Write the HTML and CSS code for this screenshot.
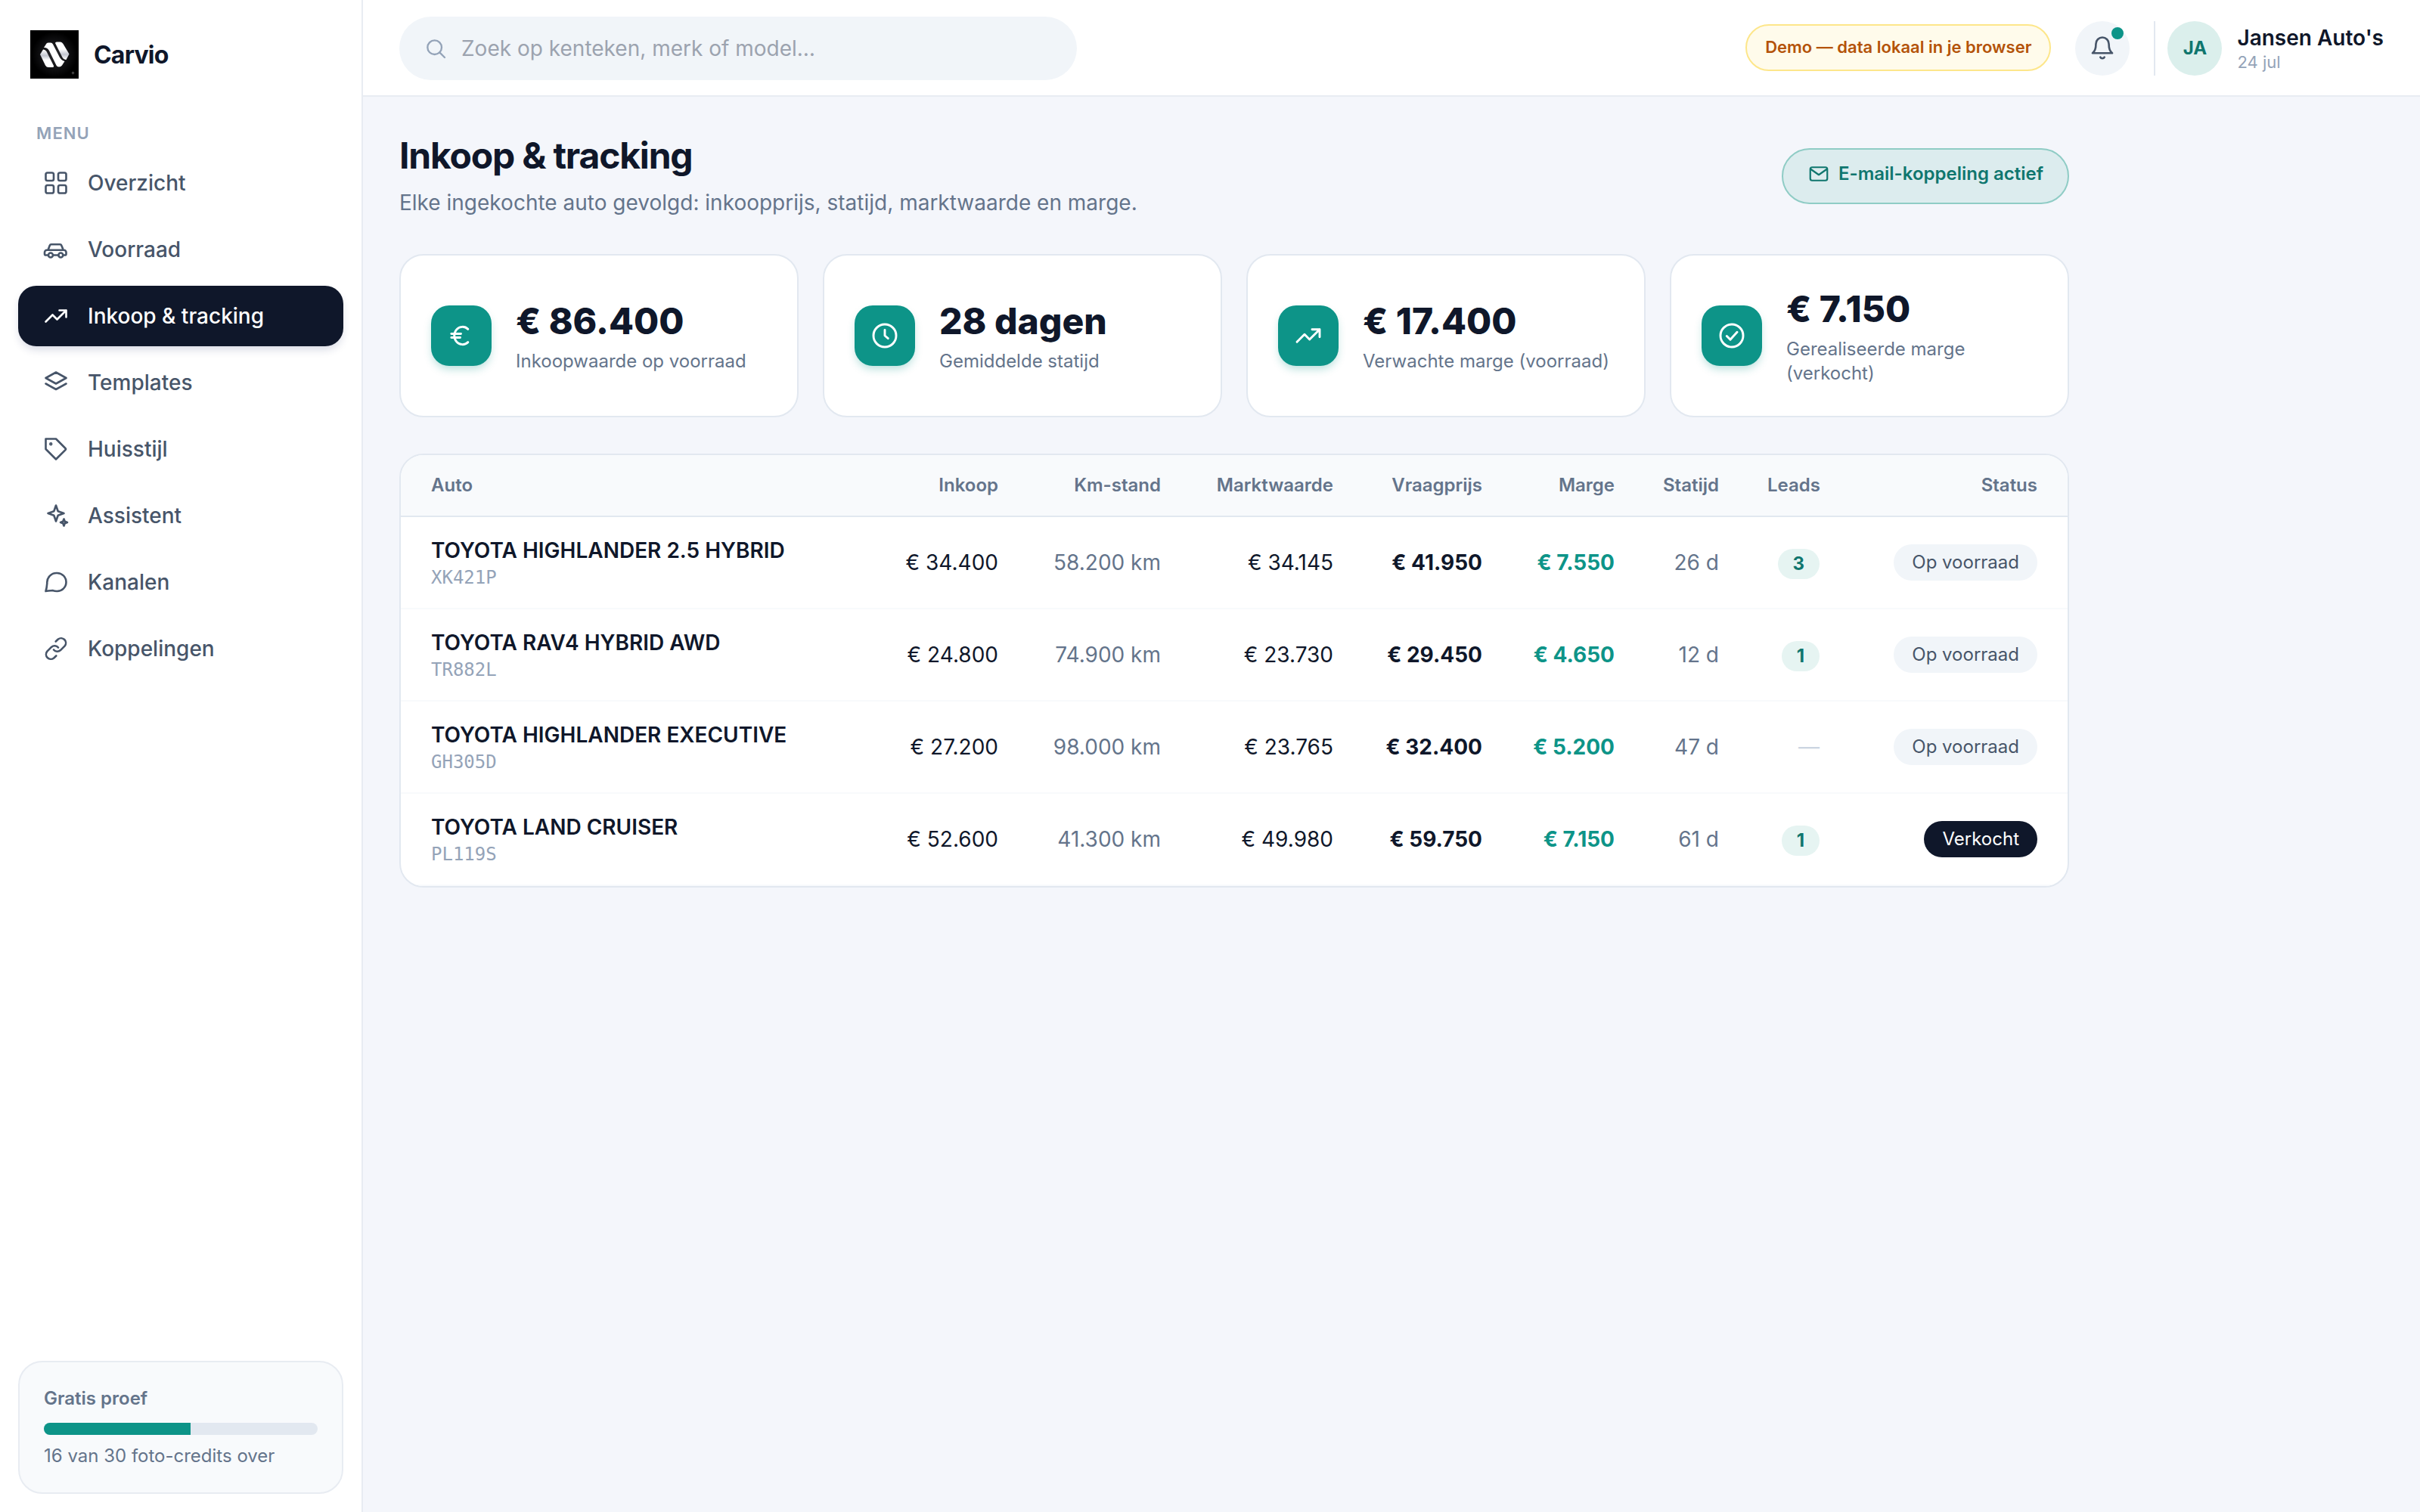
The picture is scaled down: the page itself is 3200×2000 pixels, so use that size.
FILE: index.html
```html
<!DOCTYPE html>
<html lang="nl">
<head>
    <meta charset="UTF-8">
    <meta name="viewport" content="width=device-width, initial-scale=1.0">
    <title>Carvio - Inkoop &amp; tracking</title>
    <link rel="stylesheet" href="styles.css">
</head>
<body>
    <aside class="sidebar">
        <div class="brand">
            <svg class="logo" viewBox="0 0 64 64">
                <defs>
                    <radialGradient id="glow"><stop offset="0" stop-color="#2c2c30"/><stop offset="0.6" stop-color="#111113"/><stop offset="1" stop-color="#000"/></radialGradient>
                    <linearGradient id="left" x1="0" y1="0" x2="0" y2="1"><stop offset="0" stop-color="#fff"/><stop offset="0.35" stop-color="#c3c6d0"/><stop offset="0.6" stop-color="#fff"/></linearGradient>
                    <linearGradient id="right" x1="0" y1="0" x2="0" y2="1"><stop offset="0.4" stop-color="#fff"/><stop offset="0.7" stop-color="#c3c6d0"/><stop offset="1" stop-color="#fff"/></linearGradient>
                </defs>
                <rect width="64" height="64" fill="#000"/>
                <circle cx="32" cy="32" r="30" fill="url(#glow)"/>
                <path d="M13 32L17 25.500Q19.500 25 21.500 28L31 47Q31.500 49 29 49H24Q21.500 49 20 46.500Z" fill="url(#left)"/>
                <path d="M18 23L21.500 17.500Q22.500 16.500 24 16.500H27Q29 16.500 30 18.500L38.500 35Q41 40 45.500 41L42 46.500Q40.500 48.500 38 48.500Q35.500 48.500 34.500 46.500L25 27Q22.500 22.500 18 23Z" fill="#fff"/>
                <path d="M33 17Q33 15.500 35 15.500H40Q42 15.500 43.500 18L51.500 31.500L47.500 39Q44.500 39.500 42.500 36Z" fill="url(#right)"/>
                <path d="M56.500 55v3M55 56.500h3" stroke="#777" stroke-width="0.7"/>
            </svg>
            <span class="brand-name">Carvio</span>
        </div>
        <div class="menu-label">MENU</div>
        <nav class="menu">
            <a class="menu-item">
                <svg class="icon" viewBox="0 0 24 24"><rect x="3" y="3" width="7" height="7" rx="1.500"/><rect x="14" y="3" width="7" height="7" rx="1.500"/><rect x="3" y="14" width="7" height="7" rx="1.500"/><rect x="14" y="14" width="7" height="7" rx="1.500"/></svg>
                Overzicht
            </a>
            <a class="menu-item">
                <svg class="icon" viewBox="0 0 24 24"><path d="M5 17H3a1 1 0 0 1-1-1v-1.500a2 2 0 0 1 2-2h15a2 2 0 0 1 2 2V16a1 1 0 0 1-1 1h-1.500M9.500 17h4.700M5 12.500l1.500-4A1.500 1.500 0 0 1 8 7.500h7.500a1.500 1.500 0 0 1 1.400 1l1.600 4"/><circle cx="7.300" cy="17" r="2"/><circle cx="16.200" cy="17" r="2"/></svg>
                Voorraad
            </a>
            <a class="menu-item active">
                <svg class="icon" viewBox="0 0 24 24"><path d="M3 17l6-6 4 4 8-8M15 7h6v6"/></svg>
                Inkoop &amp; tracking
            </a>
            <a class="menu-item">
                <svg class="icon" viewBox="0 0 24 24"><path d="M12 3l9 5-9 5-9-5 9-5zM3 13l9 5 9-5"/></svg>
                Templates
            </a>
            <a class="menu-item">
                <svg class="icon" viewBox="0 0 24 24"><path d="M3 3h9l8.300 8.300a1 1 0 0 1 0 1.400L12 21l-9-9V3z"/><circle cx="7.500" cy="7.500" r="0.600"/></svg>
                Huisstijl
            </a>
            <a class="menu-item">
                <svg class="icon" viewBox="0 0 24 24"><path d="M12 3l1.800 5.200L19 10l-5.200 1.800L12 17l-1.800-5.200L5 10l5.200-1.800L12 3zM19 15l.8 2.200 2.200.8-2.200.8L19 21l-.8-2.200L16 18l2.200-.8.800-2.200z"/></svg>
                Assistent
            </a>
            <a class="menu-item">
                <svg class="icon" viewBox="0 0 24 24"><path d="M21 12a8 8 0 0 1-8.200 8c-1.300 0-2.500-.2-3.800-.7-2 0-4 .5-6 .7.800-2.500 1-4.500 1.200-7A8.300 8.300 0 0 1 12.800 4 8 8 0 0 1 21 12z"/></svg>
                Kanalen
            </a>
            <a class="menu-item">
                <svg class="icon" viewBox="0 0 24 24"><path d="M10 13a4.200 4.200 0 0 0 6 .4l3.800-3.800a4.200 4.200 0 0 0-5.900-5.900L11.800 5.700M14 11a4.200 4.200 0 0 0-6-.4l-3.800 3.800a4.200 4.200 0 0 0 5.900 5.900l2.100-2"/></svg>
                Koppelingen
            </a>
        </nav>
        <div class="trial">
            <div class="trial-title">Gratis proef</div>
            <div class="progress"><div class="progress-fill" style="width: 53.5%"></div></div>
            <div class="trial-text">16 van 30 foto-credits over</div>
        </div>
    </aside>

    <div class="page">
        <header class="topbar">
            <div class="search">
                <svg class="search-icon" viewBox="0 0 24 24"><circle cx="11" cy="11" r="7"/><path d="M21 21l-5-5"/></svg>
                <span>Zoek op kenteken, merk of model…</span>
            </div>
            <div class="topbar-right">
                <span class="demo-badge">Demo — data lokaal in je browser</span>
                <div class="bell">
                    <svg class="bell-icon" viewBox="0 0 24 24"><path d="M6.300 8a5.700 5.700 0 0 1 11.400 0c0 4.500 1.300 7 3 8.200H3.300c1.700-1.200 3-3.700 3-8.200zM10.200 19.700c.7 1.400 2.900 1.400 3.600 0"/></svg>
                    <span class="bell-dot"></span>
                </div>
                <div class="user">
                    <div class="avatar">JA</div>
                    <div>
                        <div class="user-name">Jansen Auto's</div>
                        <div class="user-date">24 jul</div>
                    </div>
                </div>
            </div>
        </header>

        <main class="content">
            <div class="heading">
                <div>
                    <h1 class="title">Inkoop &amp; tracking</h1>
                    <p class="subtitle">Elke ingekochte auto gevolgd: inkoopprijs, statijd, marktwaarde en marge.</p>
                </div>
                <div class="mail-button">
                    <svg class="mail-icon" viewBox="0 0 24 24"><rect x="3" y="5" width="18" height="14" rx="2"/><path d="M3.500 7l8.500 6 8.500-6"/></svg>
                    E-mail-koppeling actief
                </div>
            </div>

            <div class="cards">
                <div class="card">
                    <div class="card-icon"><svg viewBox="0 0 24 24"><path d="M17.300 6.800a6.500 7 0 1 0 0 10.400M4.100 10.500h7.600M4.100 13.500h7"/></svg></div>
                    <div>
                        <div class="card-value">€ 86.400</div>
                        <div class="card-label">Inkoopwaarde op voorraad</div>
                    </div>
                </div>
                <div class="card">
                    <div class="card-icon"><svg viewBox="0 0 24 24"><circle cx="12" cy="12" r="9"/><path d="M12 7.500V12l2.600 2.200"/></svg></div>
                    <div>
                        <div class="card-value">28 dagen</div>
                        <div class="card-label">Gemiddelde statijd</div>
                    </div>
                </div>
                <div class="card">
                    <div class="card-icon"><svg viewBox="0 0 24 24"><path d="M3 17l6-6 4 4 8-8M15 7h6v6"/></svg></div>
                    <div>
                        <div class="card-value">€ 17.400</div>
                        <div class="card-label">Verwachte marge (voorraad)</div>
                    </div>
                </div>
                <div class="card">
                    <div class="card-icon"><svg viewBox="0 0 24 24"><circle cx="12" cy="12" r="9"/><path d="M8 12.300l2.800 2.800 5.400-5.900"/></svg></div>
                    <div>
                        <div class="card-value">€ 7.150</div>
                        <div class="card-label">Gerealiseerde marge (verkocht)</div>
                    </div>
                </div>
            </div>

            <div class="table-box">
                <table class="cars">
                    <thead>
                        <tr>
                            <th class="col-auto">Auto</th>
                            <th class="col-inkoop">Inkoop</th>
                            <th class="col-km">Km-stand</th>
                            <th class="col-markt">Marktwaarde</th>
                            <th class="col-vraag">Vraagprijs</th>
                            <th class="col-marge">Marge</th>
                            <th class="col-statijd">Statijd</th>
                            <th class="col-leads">Leads</th>
                            <th class="col-status">Status</th>
                        </tr>
                    </thead>
                    <tbody>
                        <tr>
                            <td><div class="car-name">TOYOTA HIGHLANDER 2.5 HYBRID</div><div class="plate">XK421P</div></td>
                            <td>€ 34.400</td>
                            <td class="muted">58.200 km</td>
                            <td>€ 34.145</td>
                            <td class="price">€ 41.950</td>
                            <td class="margin">€ 7.550</td>
                            <td class="muted">26 d</td>
                            <td><span class="leads">3</span></td>
                            <td><span class="status">Op voorraad</span></td>
                        </tr>
                        <tr>
                            <td><div class="car-name">TOYOTA RAV4 HYBRID AWD</div><div class="plate">TR882L</div></td>
                            <td>€ 24.800</td>
                            <td class="muted">74.900 km</td>
                            <td>€ 23.730</td>
                            <td class="price">€ 29.450</td>
                            <td class="margin">€ 4.650</td>
                            <td class="muted">12 d</td>
                            <td><span class="leads">1</span></td>
                            <td><span class="status">Op voorraad</span></td>
                        </tr>
                        <tr>
                            <td><div class="car-name">TOYOTA HIGHLANDER EXECUTIVE</div><div class="plate">GH305D</div></td>
                            <td>€ 27.200</td>
                            <td class="muted">98.000 km</td>
                            <td>€ 23.765</td>
                            <td class="price">€ 32.400</td>
                            <td class="margin">€ 5.200</td>
                            <td class="muted">47 d</td>
                            <td class="none">—</td>
                            <td><span class="status">Op voorraad</span></td>
                        </tr>
                        <tr>
                            <td><div class="car-name">TOYOTA LAND CRUISER</div><div class="plate">PL119S</div></td>
                            <td>€ 52.600</td>
                            <td class="muted">41.300 km</td>
                            <td>€ 49.980</td>
                            <td class="price">€ 59.750</td>
                            <td class="margin">€ 7.150</td>
                            <td class="muted">61 d</td>
                            <td><span class="leads">1</span></td>
                            <td><span class="status sold">Verkocht</span></td>
                        </tr>
                    </tbody>
                </table>
            </div>
        </main>
    </div>
</body>
</html>
```
FILE: styles.css
```css
* {
    box-sizing: border-box;
}
body {
    margin: 0;
    display: flex;
    min-height: 100vh;
    font-family: Inter, "Liberation Sans", sans-serif;
    font-size: 28px;
    line-height: 40px;
    color: #0f172a;
    background-color: #f4f6fb;
}
svg {
    display: block;
    flex-shrink: 0;
    fill: none;
    stroke: currentColor;
    stroke-width: 1.75;
    stroke-linecap: round;
    stroke-linejoin: round;
}

/* sidebar */
.sidebar {
    width: 480px;
    height: 2000px;
    display: flex;
    flex-direction: column;
    flex-shrink: 0;
    padding: 40px 24px 24px;
    background-color: #fff;
    border-right: 2px solid #e8ecf2;
}
.brand {
    display: flex;
    align-items: center;
    gap: 20px;
    padding-left: 16px;
}
.logo {
    width: 64px;
    height: 64px;
    stroke: none;
}
.brand-name {
    padding-top: 2px;
    font-size: 32px;
    font-weight: 700;
    letter-spacing: -0.8px;
}
.menu-label {
    margin-top: 56px;
    padding-left: 24px;
    font-size: 22px;
    line-height: 32px;
    font-weight: 600;
    letter-spacing: 1.1px;
    color: #94a3b8;
}
.menu {
    display: flex;
    flex-direction: column;
    gap: 8px;
    margin-top: 10px;
}
.menu-item {
    display: flex;
    align-items: center;
    gap: 24px;
    height: 80px;
    padding: 0 32px;
    border-radius: 24px;
    font-weight: 500;
    color: #475569;
}
.active {
    color: #fff;
    background-color: #0f172a;
    box-shadow: 0 6px 12px -2px rgba(30, 41, 100, 0.18);
}
.icon {
    width: 36px;
    height: 36px;
}
.trial {
    margin-top: auto;
    padding: 32px;
    border: 2px solid #e8ecf2;
    border-radius: 32px;
    background-color: #f8fafc;
    font-size: 24px;
    line-height: 32px;
    color: #64748b;
}
.trial-title {
    font-weight: 600;
}
.progress {
    height: 16px;
    margin: 16px 0 12px;
    border-radius: 8px;
    background-color: #e2e8f0;
    overflow: hidden;
}
.progress-fill {
    height: 100%;
    background-color: #0d9488;
}

/* top bar */
.page {
    flex: 1;
}
.topbar {
    display: flex;
    align-items: center;
    justify-content: space-between;
    height: 128px;
    padding: 2px 48px 0;
    background-color: #fff;
    border-bottom: 2px solid #e8ecf2;
}
.search {
    display: flex;
    align-items: center;
    gap: 18px;
    width: 896px;
    height: 84px;
    padding: 0 32px;
    border-radius: 42px;
    background-color: #f1f5f9;
    color: #9ca3af;
}
.search-icon {
    width: 32px;
    height: 32px;
    color: #94a3b8;
}
.topbar-right {
    display: flex;
    align-items: center;
    gap: 32px;
}
.demo-badge {
    margin-bottom: 2px;
    padding: 12px 24px 14px;
    border: 2px solid #fde68a;
    border-radius: 31px;
    background-color: #fffbeb;
    font-size: 22px;
    line-height: 32px;
    font-weight: 600;
    color: #b45309;
}
.bell {
    position: relative;
    display: flex;
    align-items: center;
    justify-content: center;
    width: 72px;
    height: 72px;
    border-radius: 50%;
    background-color: #f1f5f9;
    color: #475569;
}
.bell-icon {
    width: 36px;
    height: 36px;
}
.bell-dot {
    position: absolute;
    top: 8px;
    right: 8px;
    width: 16px;
    height: 16px;
    border-radius: 50%;
    background-color: #0d9488;
}
.user {
    display: flex;
    align-items: center;
    gap: 20px;
    height: 72px;
    padding-left: 16px;
    border-left: 2px solid #e2e8f0;
}
.avatar {
    width: 72px;
    height: 72px;
    border-radius: 50%;
    background-color: #dbefec;
    font-size: 24px;
    line-height: 72px;
    font-weight: 700;
    text-align: center;
    color: #0f766e;
}
.user-name {
    padding-top: 2px;
    line-height: 34px;
    font-weight: 600;
}
.user-date {
    font-size: 22px;
    line-height: 30px;
    color: #94a3b8;
}

/* page content */
.content {
    width: 2304px;
    padding: 48px;
}
.heading {
    display: flex;
    align-items: center;
    justify-content: space-between;
    margin-bottom: 48px;
}
.title {
    margin: 0;
    font-size: 48px;
    line-height: 60px;
    font-weight: 700;
    letter-spacing: -1.2px;
}
.subtitle {
    margin: 12px 0 0;
    color: #64748b;
}
.mail-button {
    display: flex;
    align-items: center;
    gap: 11px;
    height: 74px;
    margin-top: 2px;
    padding: 0 32px 6px;
    border: 2px solid #8fccc5;
    border-radius: 37px;
    background-color: #dcecee;
    font-size: 24px;
    line-height: 32px;
    font-weight: 600;
    color: #0f766e;
}
.mail-icon {
    width: 30px;
    height: 30px;
}
.cards {
    display: grid;
    grid-template-columns: repeat(4, 1fr);
    gap: 32px;
    margin-bottom: 48px;
}
.card {
    display: flex;
    align-items: center;
    gap: 32px;
    height: 216px;
    padding: 0 40px;
    border: 2px solid #e2e8f0;
    border-radius: 32px;
    background-color: #fff;
}
.card-icon {
    display: flex;
    align-items: center;
    justify-content: center;
    flex-shrink: 0;
    width: 80px;
    height: 80px;
    border-radius: 24px;
    background-color: #0d9488;
    color: #fff;
    box-shadow: 0 6px 12px -2px rgba(13, 148, 136, 0.3);
}
.card-icon svg {
    width: 40px;
    height: 40px;
}
.card-value {
    font-size: 48px;
    line-height: 61px;
    font-weight: 800;
}
.card-label {
    margin-top: 7px;
    font-size: 24px;
    line-height: 32px;
    color: #64748b;
}

/* table */
.table-box {
    border: 2px solid #e2e8f0;
    border-radius: 32px;
    background-color: #fff;
    overflow: hidden;
}
.cars {
    width: 100%;
    table-layout: fixed;
    border-spacing: 0;
}
.cars th {
    height: 82px;
    padding: 0 32px;
    border-bottom: 2px solid #e2e8f0;
    background-color: #f8fafc;
    font-size: 24px;
    line-height: 32px;
    font-weight: 600;
    text-align: right;
    color: #64748b;
}
.cars td {
    height: 122px;
    padding: 0 32px;
    border-bottom: 2px solid #f8fafc;
    text-align: right;
}
.cars th:first-child,
.cars td:first-child {
    padding-left: 40px;
    text-align: left;
}
.cars th:last-child,
.cars td:last-child {
    padding-right: 40px;
}
.col-auto { width: 606px; }
.col-inkoop { width: 216px; }
.col-km { width: 215px; }
.col-markt { width: 228px; }
.col-vraag { width: 197px; }
.col-marge { width: 175px; }
.col-statijd { width: 138px; }
.col-leads { width: 133px; }
.col-status { width: 296px; }
.car-name {
    font-weight: 600;
}
.plate {
    font-family: "DejaVu Sans Mono", monospace;
    font-size: 24px;
    line-height: 32px;
    color: #94a3b8;
}
.cars .muted {
    color: #64748b;
}
.cars .price {
    font-weight: 700;
}
.cars .margin {
    font-weight: 700;
    color: #0d9488;
}
.cars .none {
    color: #cbd5e1;
}
.leads {
    display: inline-block;
    margin-top: 3px;
    padding: 4px 20px;
    border-radius: 20px;
    background-color: #e6f4f2;
    font-size: 24px;
    line-height: 32px;
    font-weight: 700;
    color: #0f766e;
}
.status {
    display: inline-block;
    padding: 8px 24px;
    border-radius: 24px;
    background-color: #f1f5f9;
    font-size: 24px;
    line-height: 32px;
    color: #475569;
}
.sold {
    background-color: #0f172a;
    color: #fff;
}
```
